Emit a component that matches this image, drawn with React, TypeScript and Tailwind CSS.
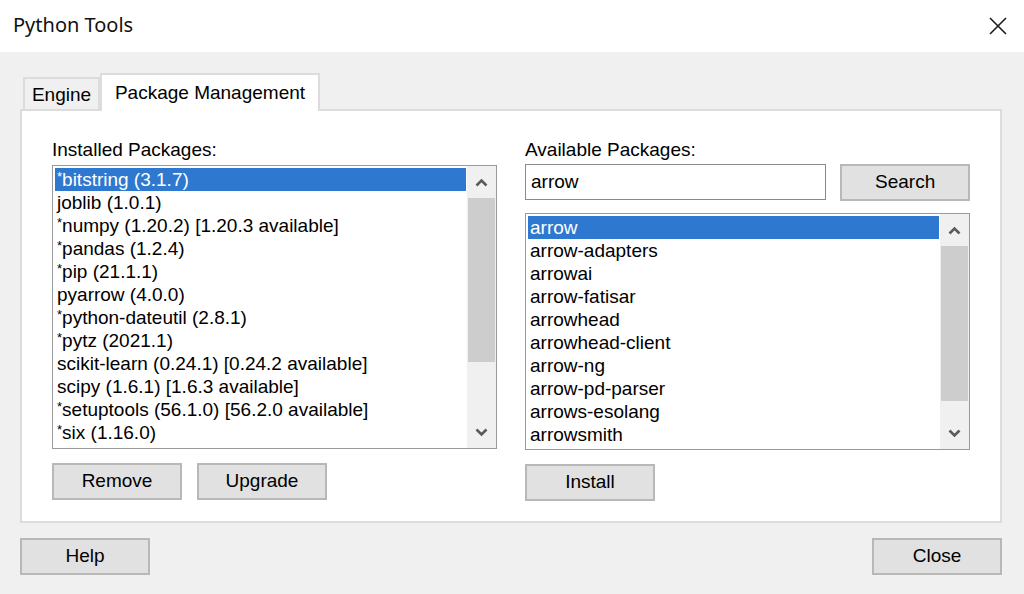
import React from "react";

const installed = [
  "*bitstring (3.1.7)",
  "joblib (1.0.1)",
  "*numpy (1.20.2) [1.20.3 available]",
  "*pandas (1.2.4)",
  "*pip (21.1.1)",
  "pyarrow (4.0.0)",
  "*python-dateutil (2.8.1)",
  "*pytz (2021.1)",
  "scikit-learn (0.24.1) [0.24.2 available]",
  "scipy (1.6.1) [1.6.3 available]",
  "*setuptools (56.1.0) [56.2.0 available]",
  "*six (1.16.0)",
];

const available = [
  "arrow",
  "arrow-adapters",
  "arrowai",
  "arrow-fatisar",
  "arrowhead",
  "arrowhead-client",
  "arrow-ng",
  "arrow-pd-parser",
  "arrows-esolang",
  "arrowsmith",
];

function Chevron({ up }: { up?: boolean }) {
  return (
    <svg width="13" height="9" viewBox="0 0 13 9">
      <path
        d={up ? "M1.5 7.5 L6.5 2.5 L11.5 7.5" : "M1.5 1.5 L6.5 6.5 L11.5 1.5"}
        fill="none"
        stroke="#5a5a5a"
        strokeWidth="2.6"
      />
    </svg>
  );
}

function Row({ text, selected }: { text: string; selected?: boolean }) {
  const star = text.startsWith("*");
  const body = star ? text.slice(1) : text;
  return (
    <div
      className={
        "h-[23px] leading-[23px] pl-[2px] whitespace-nowrap " +
        (selected ? "bg-[#2f78cf] text-white" : "text-black")
      }
    >
      {star && (
        <span className="inline-block text-[13px] leading-none -translate-y-[5px]">*</span>
      )}
      {body}
    </div>
  );
}

function ListBox({
  items,
  heightClass,
  thumbClass,
}: {
  items: string[];
  heightClass: string;
  thumbClass: string;
}) {
  return (
    <div className={"flex border border-[#9a9a9a] bg-white " + heightClass}>
      <div className="flex-1 pt-[2px] pl-[2px] pr-[1px] overflow-hidden">
        {items.map((t, i) => (
          <Row key={t} text={t} selected={i === 0} />
        ))}
      </div>
      <div className="w-[29px] bg-[#f0f0f0] flex flex-col">
        <div className="h-[32px] flex items-center justify-center">
          <Chevron up />
        </div>
        <div className={"mx-[1px] bg-[#cdcdcd] " + thumbClass} />
        <div className="flex-1" />
        <div className="h-[32px] flex items-center justify-center">
          <Chevron />
        </div>
      </div>
    </div>
  );
}

function Button({ label }: { label: string }) {
  return (
    <div className="w-[130px] h-[37px] bg-[#e1e1e1] border-2 border-[#b8b8b8] flex items-center justify-center text-black">
      {label}
    </div>
  );
}

export default function App() {
  return (
    <div className="w-[1024px] h-[594px] bg-[#f0f0f0] font-['Liberation_Sans',Arial,sans-serif] text-[19px] text-black overflow-hidden">
      <div className="h-[52px] bg-white flex items-center justify-between pl-[13px] pr-[17px]">
        <div className="font-['Noto_Sans',sans-serif] text-[20px] text-[#111] pb-[2px]">
          Python Tools
        </div>
        <svg width="18" height="18" viewBox="0 0 18 18">
          <path d="M1 1 L17 17 M17 1 L1 17" stroke="#1a1a1a" strokeWidth="1.6" fill="none" />
        </svg>
      </div>
      <div className="w-[982px] ml-[20px] pt-[21px]">
        <div className="flex items-end h-[36px] pl-[3px] relative z-10">
          <div className="w-[77px] h-[32px] bg-[#f0f0f0] border-2 border-b-0 border-[#dcdcdc] flex items-center justify-center pt-[2px]">
            Engine
          </div>
          <div className="w-[220px] h-[38px] -mb-[2px] bg-white border-2 border-b-0 border-[#dcdcdc] flex items-start justify-center pt-[4px]">
            Package Management
          </div>
        </div>
        <div className="h-[414px] bg-white border-2 border-[#dcdcdc] flex pl-[30px] pr-[30px] pt-[28px] gap-[28px]">
          <div className="w-[445px] flex flex-col">
            <div className="h-[22px] leading-[22px]">Installed Packages:</div>
            <div className="mt-[4px]">
              <ListBox items={installed} heightClass="h-[284px]" thumbClass="h-[164px]" />
            </div>
            <div className="mt-[14px] flex gap-[15px]">
              <Button label="Remove" />
              <Button label="Upgrade" />
            </div>
          </div>
          <div className="w-[445px] flex flex-col">
            <div className="h-[22px] leading-[22px]">Available Packages:</div>
            <div className="mt-[3px] flex gap-[14px]">
              <div className="w-[302px] h-[36px] border border-[#8a8a8a] bg-white flex items-center pl-[5px]">
                arrow
              </div>
              <Button label="Search" />
            </div>
            <div className="mt-[12px]">
              <ListBox items={available} heightClass="h-[237px]" thumbClass="h-[155px]" />
            </div>
            <div className="mt-[14px] flex">
              <Button label="Install" />
            </div>
          </div>
        </div>
        <div className="mt-[15px] flex justify-between">
          <Button label="Help" />
          <Button label="Close" />
        </div>
      </div>
    </div>
  );
}
